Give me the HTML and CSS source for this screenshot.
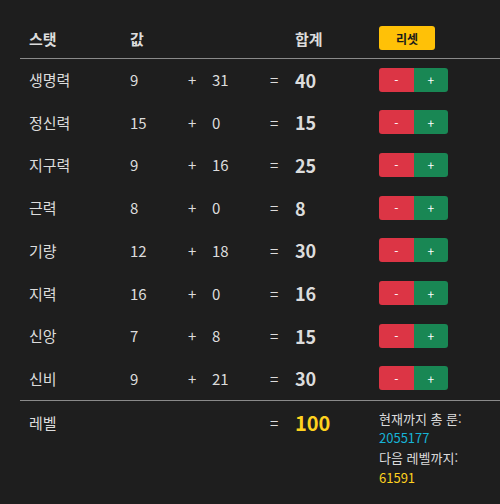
FILE: index.html
```html
<!DOCTYPE html>
<html lang="ko">
<head>
  <meta charset="UTF-8">
  <title>스탯 계산기</title>
  <link rel="stylesheet" href="styles.css">
</head>
<body>
  <table class="stat-table">
    <colgroup>
      <col class="c-name">
      <col class="c-base">
      <col class="c-plus">
      <col class="c-bonus">
      <col class="c-eq">
      <col class="c-total">
      <col class="c-btn">
    </colgroup>
    <thead>
      <tr>
        <th>스탯</th>
        <th>값</th>
        <th></th>
        <th></th>
        <th></th>
        <th>합계</th>
        <th><button class="btn-reset">리셋</button></th>
      </tr>
    </thead>
    <tbody id="stats"></tbody>
    <tfoot>
      <tr>
        <td>레벨</td>
        <td></td>
        <td></td>
        <td></td>
        <td>=</td>
        <td class="level" id="level">100</td>
        <td class="info">
          <div>현재까지 총 룬:</div>
          <div class="runes">2055177</div>
          <div>다음 레벨까지:</div>
          <div class="next">61591</div>
        </td>
      </tr>
    </tfoot>
  </table>

  <script>
    const stats = [
      ["생명력", 9, 31],
      ["정신력", 15, 0],
      ["지구력", 9, 16],
      ["근력", 8, 0],
      ["기량", 12, 18],
      ["지력", 16, 0],
      ["신앙", 7, 8],
      ["신비", 9, 21]
    ];

    const tbody = document.getElementById("stats");

    stats.forEach(([name, base, bonus]) => {
      const tr = document.createElement("tr");
      tr.innerHTML = `
        <td>${name}</td>
        <td>${base}</td>
        <td>+</td>
        <td>${bonus}</td>
        <td>=</td>
        <td class="total">${base + bonus}</td>
        <td><div class="btn-group"><button class="btn-minus">-</button><button class="btn-plus">+</button></div></td>`;
      tbody.appendChild(tr);
    });
  </script>
</body>
</html>
```

FILE: styles.css
```css
* {
  box-sizing: border-box;
}

body {
  margin: 0;
  padding: 20px 0 0 20px;
  background: #1e1e1e;
  color: #dcdcdc;
  font-family: "Noto Sans CJK KR", "Noto Sans", sans-serif;
  font-size: 15px;
}

.stat-table {
  border-collapse: collapse;
  table-layout: fixed;
  width: 480px;
}

.c-name { width: 101px; }
.c-base { width: 58px; }
.c-plus { width: 24px; }
.c-bonus { width: 58px; }
.c-eq { width: 25px; }
.c-total { width: 84px; }
.c-btn { width: 130px; }

th, td {
  text-align: left;
  padding: 0 0 0 9px;
  vertical-align: middle;
}

th {
  height: 38px;
  font-weight: bold;
  border-bottom: 1px solid #8a8a8a;
  padding-bottom: 1px;
}

tbody td {
  height: 42.75px;
}

tfoot td {
  vertical-align: top;
  padding-top: 10px;
  height: 103px;
  border-top: 1px solid #8a8a8a;
}

.total {
  font-weight: bold;
  font-size: 18px;
}

.level {
  font-weight: bold;
  font-size: 20px;
  color: #ffd21f;
  line-height: 24px;
}

tfoot td:first-child,
tfoot td:nth-child(5) {
  line-height: 24px;
}

.info {
  font-size: 13px;
  line-height: 19.7px;
  padding-top: 8px;
}

.runes {
  color: #17b3d6;
}

.next {
  color: #ffd21f;
}

button {
  font-family: inherit;
  border: none;
  cursor: pointer;
}

.btn-reset {
  background: #ffc107;
  color: #1a1a1a;
  font-size: 12px;
  font-weight: bold;
  width: 56px;
  height: 24px;
  border-radius: 3px;
  padding: 0;
}

.btn-group {
  display: flex;
  width: 69px;
  height: 24px;
  border-radius: 3px;
  overflow: hidden;
}

.btn-minus,
.btn-plus {
  flex: 1;
  color: #fff;
  font-size: 12px;
  padding: 0;
}

.btn-minus {
  background: #dc3545;
}

.btn-plus {
  background: #198754;
}
```
